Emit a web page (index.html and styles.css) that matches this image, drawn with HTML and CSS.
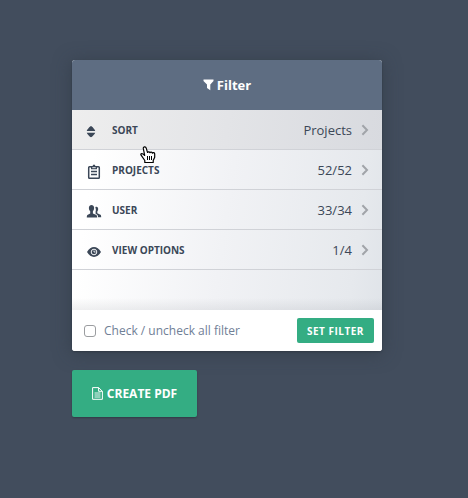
FILE: index.html
```html
<!DOCTYPE html>
<html lang="en">
<head>
    <meta charset="UTF-8">
    <meta name="viewport" content="width=device-width, initial-scale=1.0">
    <title>Filter</title>
    <link rel="stylesheet" href="styles.css">
</head>
<body>
    <div class="filter-panel">
        <header class="filter-header">
            <svg class="funnel-icon" width="11" height="12" viewBox="0 0 11 12">
                <path d="M0.500 0.500h10v1.500L7.300 5.500v5.700L4 9V5.500L0.500 2z" fill="#fff"/>
            </svg>
            <h1>Filter</h1>
        </header>
        <ul class="filter-list">
            <li class="filter-item active">
                <span class="item-icon">
                    <svg width="16" height="16" viewBox="0 0 16 16" fill="#3b4757">
                        <path d="M.8 7c0-.9 3.200-5 4.200-5s4.200 4.100 4.200 5zM.8 8.700h8.400c0 .9-3.200 4.500-4.200 4.500S.8 9.600.8 8.700z"/>
                    </svg>
                </span>
                <span class="item-label">Sort</span>
                <span class="item-value">Projects</span>
                <svg class="chevron" width="8" height="12" viewBox="0 0 8 12"><path d="M1.400 1.300L6 6l-4.600 4.700"/></svg>
            </li>
            <li class="filter-item">
                <span class="item-icon">
                    <svg width="16" height="16" viewBox="0 0 16 16" fill="none" stroke="#3b4757">
                        <rect x="2.700" y="2.700" width="10.600" height="11.600" rx="0.800" stroke-width="1.500"/>
                        <path d="M5 5.300V2.100h1.600Q6.800.5 8 .5t1.400 1.600H11v3.200z" fill="#3b4757" stroke="none"/>
                        <path d="M6.300 3.700h3.400" stroke="#fff" stroke-width="0.900"/>
                        <path d="M5 7.500h6M5 10.500h6" stroke-width="1.300"/>
                    </svg>
                </span>
                <span class="item-label">Projects</span>
                <span class="item-value">52/52</span>
                <svg class="chevron" width="8" height="12" viewBox="0 0 8 12"><path d="M1.400 1.300L6 6l-4.600 4.700"/></svg>
            </li>
            <li class="filter-item">
                <span class="item-icon">
                    <svg width="16" height="16" viewBox="0 0 16 16" fill="#3b4757">
                        <path d="M9.300 3.300c.8-.8 2.300-.5 2.700.6.400 1.300 0 2.800-.7 3.500v1.800l3.200 1.500c.5.300.7.800.7 2.500h-3.100c0-1.600-.4-2.500-2.500-3.400V7.500c.5-1 .3-2.600-.3-4.200z"/>
                        <path d="M2.900 3.500C3.100 2 4.100 1 5.500 1S8 2 8.100 3.500c.1 1.600-.4 3-1.200 3.700v2.200l3 1.300c1 .5 1.300 1.100 1.300 2.900H.8c0-1.800.2-2.500 1.100-2.900l2.300-1.300V7.200C3.300 6.500 2.800 5.100 2.900 3.500z"/>
                    </svg>
                </span>
                <span class="item-label">User</span>
                <span class="item-value">33/34</span>
                <svg class="chevron" width="8" height="12" viewBox="0 0 8 12"><path d="M1.400 1.300L6 6l-4.600 4.700"/></svg>
            </li>
            <li class="filter-item">
                <span class="item-icon">
                    <svg width="16" height="16" viewBox="0 0 16 16">
                        <path d="M1 8q3-4.900 7-4.900T15 8q-3 4.900-7 4.900T1 8z" fill="#3b4757"/>
                        <circle cx="8" cy="8" r="2.800" fill="none" stroke="#f4f5f7"/>
                        <path d="M8 6.500V8h1.500" fill="none" stroke="#f4f5f7" stroke-width="0.900"/>
                    </svg>
                </span>
                <span class="item-label">View Options</span>
                <span class="item-value">1/4</span>
                <svg class="chevron" width="8" height="12" viewBox="0 0 8 12"><path d="M1.400 1.300L6 6l-4.600 4.700"/></svg>
            </li>
        </ul>
        <footer class="filter-footer">
            <input type="checkbox" id="checkAll">
            <label for="checkAll">Check / uncheck all filter</label>
            <button class="set-btn">Set Filter</button>
        </footer>
    </div>
    <button class="pdf-btn">
        <svg width="11" height="13" viewBox="0 0 11 13" fill="none" stroke="#fff">
            <path d="M.6.6h6l3.800 3.700v8H.6zM6.600.6v3.700h3.800"/>
            <path d="M2.500 6h6M2.500 8h6M2.500 10h6" stroke-width="0.900"/>
        </svg>
        <span>Create PDF</span>
    </button>
    <!-- hand pointer -->
    <svg class="pointer" width="16" height="18" viewBox="0 0 16 18">
        <path d="M4.700 9.500L2.900 7.900C1.500 7 .4 8.100 1.100 9.200l3.700 5.300v2h8.400v-2l1.500-3.300V7.900c-.2-1.500-1.700-1.500-2.200-.7-.4-1.300-2-1.400-2.500-.5-.5-1.100-2-1.100-2.500-.3L6.200 2.100C5.800.3 3.100.6 3.300 2.400z" fill="#fff" stroke="#000" stroke-width="1.200" stroke-linejoin="round"/>
        <path d="M7.500 10v4M9.500 10v4M11.500 10v4" stroke="#000"/>
    </svg>
</body>
</html>
```
FILE: styles.css
```css
* {
    box-sizing: border-box;
}
body {
    font-family: "Open Sans", "Noto Sans", sans-serif;
    margin: 0;
    padding: 60px 72px;
    background-color: #424d5d;
    color: #3b4757;
}
.filter-panel {
    width: 310px;
    border-radius: 3px;
    background-color: white;
    overflow: hidden;
    box-shadow: 0 2px 18px rgba(45, 55, 65, 0.6), 0 1px 2px rgba(0, 0, 0, 0.25);
}
.filter-header {
    height: 50px;
    display: flex;
    align-items: center;
    justify-content: center;
    gap: 3px;
    background-color: #5e6d82;
    color: white;
}
.filter-header h1 {
    margin: 0;
    font-size: 13px;
    font-weight: bold;
}
.funnel-icon {
    margin-top: -1px;
}
.filter-list {
    list-style: none;
    margin: 0;
    padding: 0;
    height: 200px;
    background: linear-gradient(to top, rgba(100, 105, 115, 0.1), transparent 12px), linear-gradient(98deg, #fff 8%, #f1f2f5 50%, #e6e9ed 90%, #e0e4e9);
}
.filter-item {
    height: 40px;
    display: flex;
    align-items: center;
    padding: 0 13px 0 14px;
    border-bottom: 1px solid #d0d2d7;
}
.filter-item.active {
    background: linear-gradient(98deg, #eee, #e3e4e7 50%, #d8dadf);
}
.item-icon {
    width: 26px;
    height: 16px;
    margin-top: 4px;
}
.item-icon svg {
    display: block;
}
.item-label {
    font-size: 10px;
    font-weight: bold;
    text-transform: uppercase;
}
.item-value {
    margin-left: auto;
    font-size: 13px;
}
.chevron {
    margin-left: 9px;
    fill: none;
    stroke: #a1a4a9;
    stroke-width: 2;
}
.filter-footer {
    height: 41px;
    display: flex;
    align-items: center;
    padding: 0 8px 0 12px;
    background-color: white;
}
.filter-footer input {
    appearance: none;
    width: 12px;
    height: 12px;
    margin: 0 8px 0 0;
    border: 1px solid #9b9da0;
    border-radius: 3px;
    background-color: white;
}
.filter-footer label {
    font-size: 12px;
    color: #708096;
}
button {
    border: none;
    padding: 0;
    background-color: #34ad83;
    color: white;
    font-family: inherit;
    font-weight: bold;
    text-transform: uppercase;
    cursor: pointer;
}
.set-btn {
    width: 77px;
    height: 25px;
    margin-left: auto;
    border-radius: 2px;
    font-size: 10px;
    letter-spacing: 0.5px;
}
.pdf-btn {
    width: 125px;
    height: 47px;
    margin-top: 19px;
    display: flex;
    align-items: center;
    justify-content: center;
    gap: 4px;
    border-radius: 2px;
    font-size: 12px;
    box-shadow: 0 1px 2px rgba(0, 0, 0, 0.25);
}
.pointer {
    position: absolute;
    left: 140px;
    top: 146px;
}
```
